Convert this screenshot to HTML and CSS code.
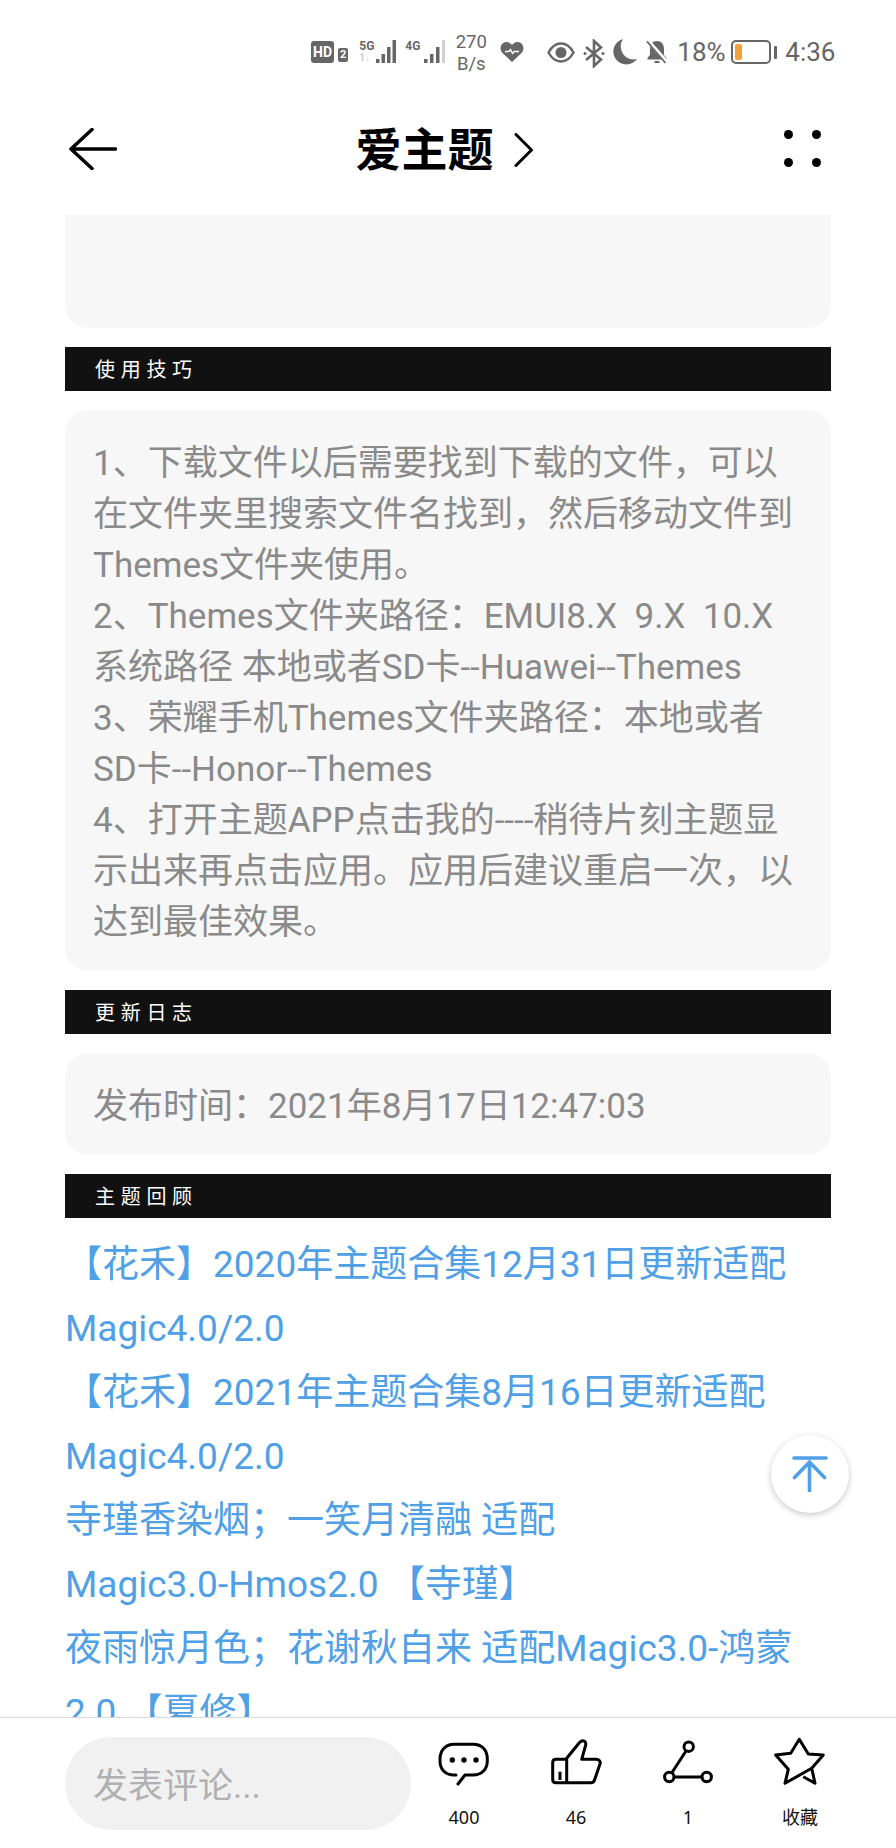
FILE: index.html
```html
<!DOCTYPE html>
<html lang="zh">
<head>
<meta charset="utf-8">
<title>爱主题</title>
<link rel="stylesheet" href="styles.css">
</head>
<body>
<div class="screen">
  <div class="status">
    <span class="hd">HD</span><span class="hd-n">2</span>
    <span class="net net1">
      <span class="net-col"><span class="net-t">5G</span><span class="net-f">1↓</span></span>
      <svg width="21" height="24" viewBox="0 0 21 24"><rect x="0" y="19" width="3.500" height="4" fill="#666"/><rect x="5.500" y="14" width="3.500" height="9" fill="#666"/><rect x="11" y="7" width="3.500" height="16" fill="#666"/><rect x="16.500" y="0" width="3.500" height="23" fill="#666"/></svg>
    </span>
    <span class="net net2">
      <span class="net-col net-col-w"><span class="net-t">4G</span></span>
      <svg width="21" height="24" viewBox="0 0 21 24"><rect x="0" y="19" width="3.500" height="4" fill="#666"/><rect x="6" y="14" width="3.500" height="9" fill="#666"/><rect x="12" y="7" width="3.500" height="16" fill="#666"/><rect x="18" y="0" width="3" height="23" fill="#d0d0d0"/></svg>
    </span>
    <span class="speed">270<br>B/s</span>
    <svg class="s-heart" width="24" height="20" viewBox="0 0 24 20"><path d="M12 20 2 10.500C-1 6.500 1 0 6.500 0 9 0 11 1.500 12 3 13 1.500 15 0 17.500 0 23 0 25 6.500 22 10.500Z" fill="#666"/><path d="M5 9.500h4l1.500-2 2 4 1.500-2h5" fill="none" stroke="#fff" stroke-width="1.300"/></svg>
    <svg class="s-eye" width="28" height="21" viewBox="0 0 28 21"><path d="M1.500 10.500C5 4 9 1.500 14 1.500S23 4 26.500 10.500C23 17 19 19.500 14 19.500S5 17 1.500 10.500Z" fill="none" stroke="#666" stroke-width="2.400"/><circle cx="14" cy="10.500" r="5.500" fill="#666"/></svg>
    <svg class="s-bt" width="22" height="29" viewBox="0 0 22 29"><path d="M3 8 18 20.500 11 27V2l7 6.500L3 21" fill="none" stroke="#666" stroke-width="2.600"/><circle cx="2" cy="14.500" r="1.500" fill="#666"/><circle cx="20" cy="14.500" r="1.500" fill="#666"/></svg>
    <svg class="s-moon" width="24" height="26" viewBox="0 0 24 26"><path d="M10 0A13 13 0 1 0 24 20 13 13 0 0 1 10 0Z" fill="#666"/></svg>
    <svg class="s-bell" width="22" height="23" viewBox="0 0 22 23"><path d="M11 0c-4.500 0-7 3.500-7 8v6l-2.500 3v1.500h19V17L18 14V8c0-4.500-2.500-8-7-8Z" fill="#666"/><path d="M8.500 21h5" stroke="#666" stroke-width="2"/><path d="M2.500 0.500 21 21.500" stroke="#fff" stroke-width="4"/><path d="M1 0.500 19.500 22" stroke="#666" stroke-width="1.800"/></svg>
    <span class="s-text pct">18%</span>
    <span class="batt"><span class="batt-fill"></span></span><span class="batt-tip"></span>
    <span class="s-text clock">4:36</span>
  </div>

  <header class="nav">
    <svg class="nav-back" width="48" height="42" viewBox="0 0 48 42"><path d="M23 1.500 2 21 23 40.500M2 21H46.500" fill="none" stroke="#000" stroke-width="3.500" stroke-linecap="round" stroke-linejoin="round"/></svg>
    <div class="nav-title">爱主题
      <svg class="nav-chev" width="20" height="34" viewBox="0 0 20 34"><path d="M2 1.500 17.500 17 2 32.500" fill="none" stroke="#000" stroke-width="3" stroke-linecap="round" stroke-linejoin="round"/></svg>
    </div>
    <div class="nav-dots"><i></i><i></i><i></i><i></i></div>
  </header>

  <main class="content">
    <div class="card card-top"></div>
    <h2 class="bar">使用技巧</h2>
    <div class="card">
      <p>1、下载文件以后需要找到下载的文件，可以在文件夹里搜索文件名找到，然后移动文件到Themes文件夹使用。</p>
      <p>2、Themes文件夹路径：EMUI8.X&nbsp; 9.X&nbsp; 10.X系统路径 本地或者SD卡--Huawei--Themes</p>
      <p>3、荣耀手机Themes文件夹路径：本地或者SD卡--Honor--Themes</p>
      <p>4、打开主题APP点击我的----稍待片刻主题显示出来再点击应用。应用后建议重启一次，以达到最佳效果。</p>
    </div>
    <h2 class="bar">更新日志</h2>
    <div class="card"><p>发布时间：2021年8月17日12:47:03</p></div>
    <h2 class="bar">主题回顾</h2>
    <ul class="links">
      <li>【花禾】2020年主题合集12月31日更新适配Magic4.0/2.0</li>
      <li>【花禾】2021年主题合集8月16日更新适配Magic4.0/2.0</li>
      <li>寺瑾香染烟；一笑月清融 适配 <span class="nb">Magic3.0-Hmos2.0</span> 【寺瑾】</li>
      <li>夜雨惊月色；花谢秋自来 适配Magic3.0-鸿蒙2.0 【夏修】</li>
    </ul>
  </main>

  <button class="to-top" aria-label="top">
    <svg width="36" height="36" viewBox="0 0 36 36"><path d="M2 2H34M17.500 6V35M2.500 21.500 17.500 6 32.500 21.500" fill="none" stroke="#4fa0e6" stroke-width="3.600" stroke-linecap="round"/></svg>
  </button>

  <footer class="bottom">
    <div class="input">发表评论...</div>
    <div class="action">
      <svg width="56" height="52" viewBox="0 0 56 52"><path d="M20 39H18C9 39 4 33 4 25V23C4 14 10 8.300 18 8.300H37C46 8.300 51.300 14 51.300 23V25C51.300 33 46 39 37 39H29L22 48" fill="none" stroke="#000" stroke-width="3" stroke-linecap="round" stroke-linejoin="round"/><circle cx="16.300" cy="24" r="2.700"/><circle cx="28" cy="24" r="2.700"/><circle cx="40" cy="24" r="2.700"/></svg>
      <span>400</span>
    </div>
    <div class="action">
      <svg width="56" height="52" viewBox="0 0 56 52"><path d="M18.700 23.300H8C6 23.300 4.700 24.500 4.700 26.500V43.500C4.700 45.500 6 46.700 8 46.700H43C45 46.700 46 45.800 46.500 44L52 28C53 25.500 51 23.300 48 23.300H33.700L37.700 9C38.200 6.500 36.500 4.300 34.500 4.700 33 5 32 6 31.300 6.700L18.700 22.300V46.700" fill="none" stroke="#000" stroke-width="3" stroke-linejoin="round"/><path d="M12 35.700V44" stroke="#000" stroke-width="3"/></svg>
      <span>46</span>
    </div>
    <div class="action">
      <svg width="56" height="52" viewBox="0 0 56 52"><circle cx="28.700" cy="10.700" r="4.700" fill="none" stroke="#000" stroke-width="3"/><circle cx="9.300" cy="41" r="4.700" fill="none" stroke="#000" stroke-width="3"/><circle cx="46.700" cy="41" r="4.700" fill="none" stroke="#000" stroke-width="3"/><path d="M26 15 12 36.500M14 41H42" stroke="#000" stroke-width="3"/></svg>
      <span>1</span>
    </div>
    <div class="action">
      <svg width="56" height="52" viewBox="0 0 56 52"><path d="M39.700 32.300 13 47.300 16.300 33.300 3.700 19 18.700 17.300 27.300 3.300 36.300 18 51.300 19 39.700 32.300 43 47.300 31.300 40.700" fill="none" stroke="#000" stroke-width="3" stroke-linejoin="round"/></svg>
      <span>收藏</span>
    </div>
  </footer>
</div>
</body>
</html>
```
FILE: styles.css
```css
* { box-sizing: border-box; }
html, body { margin: 0; padding: 0; background: #fff; }
body { font-family: Roboto, "Noto Sans CJK SC", sans-serif; }
.screen { position: relative; width: 896px; height: 1848px; overflow: hidden; background: #fff; }

.status { height: 100px; padding: 4px 0 0 311px; display: flex; align-items: center; color: #666; }
.hd { padding: 0 2px; height: 22px; background: #666; border-radius: 3px; color: #fff; font: 700 14px/22px Roboto, sans-serif; flex: none; }
.hd-n { padding: 0 2px; height: 14px; margin: 6px 0 0 4px; background: #666; border-radius: 2px; color: #fff; font: 700 11px/14px Roboto, sans-serif; flex: none; }
.s-heart, .s-eye, .s-bt, .s-moon, .s-bell { flex: none; display: block; }
.net { display: flex; align-items: flex-start; height: 24px; flex: none; }
.net1 { margin-left: 11px; width: 38px; }
.net2 { margin-left: 8px; width: 40px; }
.net-col { width: 17px; height: 24px; display: flex; flex-direction: column; justify-content: space-between; flex: none; }
.net-col-w { width: 19px; }
.net-t { font: 700 12px/12px Roboto, sans-serif; color: #666; }
.net-f { font: 700 10px/12px Roboto, sans-serif; color: #ccc; }
.speed { width: 40px; margin: 1px 0 0 6px; font: 400 18.500px/22px Roboto, sans-serif; text-align: center; flex: none; }
.s-heart { margin-left: 9px; }
.s-eye { margin-left: 23px; }
.s-bt { margin: 3px 0 0 8px; }
.s-moon { margin-left: 8px; }
.s-bell { margin-left: 9px; }
.s-text { font: 400 26px/30px Roboto, sans-serif; color: #666; flex: none; }
.pct { width: 48px; margin-left: 9px; }
.batt { width: 40px; height: 24px; margin-left: 6px; border: 2px solid #666; border-radius: 5px; padding: 2px; display: flex; flex: none; }
.batt-fill { width: 7px; background: #f0a33a; border-radius: 2px; }
.batt-tip { width: 3px; height: 13px; background: #666; margin-left: 3px; border-radius: 1px; flex: none; }
.clock { margin-left: 8px; }

.nav { height: 115px; padding: 0 75px 18px 69px; display: flex; align-items: center; justify-content: space-between; }
.nav-title { font-size: 46px; font-weight: 700; line-height: 50px; color: #000; display: flex; align-items: center; gap: 20px; margin: 2px 12px 0 0; }
.nav-dots { width: 37px; display: grid; grid-template-columns: 9px 9px; justify-content: space-between; row-gap: 19px; }
.nav-dots i { width: 9px; height: 9px; border-radius: 50%; background: #000; }

.content { height: 1502px; padding: 0 65px; overflow: hidden; }
.card { background: #f7f7f7; border-radius: 24px; padding: 28px 28px 23px; margin-bottom: 19px; color: #8a8a8a; font-size: 35px; line-height: 51px; }
.card p { margin: 0; }
.card-top { height: 113px; padding: 0; border-radius: 0 0 24px 24px; }
.bar { margin: 0 0 19px; height: 44px; background: #111; color: #fff; font-size: 20px; font-weight: 400; line-height: 46px; padding-left: 30px; letter-spacing: 5.700px; }
.links { list-style: none; margin: -4px 0 0; padding: 0; color: #4fa0e6; font-size: 37px; line-height: 64px; }
.nb { white-space: nowrap; }

.to-top { position: absolute; left: 771px; top: 1435px; width: 78px; height: 78px; border-radius: 50%; background: #fff; border: 0; padding: 0; box-shadow: 0 2px 6px rgba(0,0,0,.22); display: flex; align-items: center; justify-content: center; }

.bottom { position: absolute; left: 0; right: 0; bottom: 0; height: 131px; background: #fff; border-top: 1px solid #d8d8d8; padding: 19px 0 0 65px; display: flex; align-items: flex-start; }
.input { width: 346px; height: 93px; background: #f1f1f1; border-radius: 46.500px; color: #b0b0b0; font-size: 35px; line-height: 99px; padding-left: 28px; margin-right: -3px; flex: none; }
.action { width: 112px; margin-top: -1px; display: flex; flex-direction: column; align-items: center; color: #111; font: 400 18px/22px "Noto Sans", "Noto Sans CJK SC", sans-serif; }
.action svg { display: block; margin-bottom: 18px; }
```
